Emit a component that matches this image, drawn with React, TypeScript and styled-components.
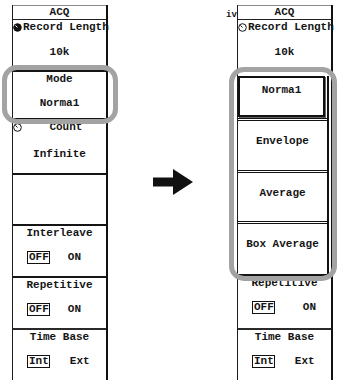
import styled, { createGlobalStyle } from 'styled-components';

const GlobalStyle = createGlobalStyle`
  html, body {
    margin: 0;
    padding: 0;
    background: #fff;
  }
  body {
    font-family: "Liberation Mono", "DejaVu Sans Mono", monospace;
  }
`;

const Page = styled.div`
  width: 337px;
  height: 380px;
  overflow: hidden;
  box-sizing: border-box;
  padding: 5px 0 0 12px;
  display: flex;
  align-items: flex-start;
  background: #fff;
  color: #151515;
  font-size: 11px;
  font-weight: bold;
`;

const PanelWrap = styled.div`
  position: relative;
  flex: none;
  width: 96px;
`;

const Panel = styled.div`
  display: flex;
  flex-direction: column;
  box-sizing: border-box;
  width: 96px;
  border-left: 1px solid #1c1c1c;
  border-right: 2px solid #111;
`;

const Header = styled.div`
  height: 15px;
  box-sizing: border-box;
  border-top: 1px solid #8a8a8a;
  border-bottom: 1px solid #222;
  text-align: center;
  line-height: 13px;
`;

const Section = styled.div<{ $h: number; $first?: boolean; $line?: string }>`
  height: ${(p) => p.$h}px;
  box-sizing: border-box;
  border-top: ${(p) => (p.$first ? 'none' : `2px solid ${p.$line ?? '#151515'}`)};
  display: flex;
  flex-direction: column;
  align-items: center;
`;

const Label = styled.div<{ $left?: boolean }>`
  align-self: ${(p) => (p.$left ? 'flex-start' : 'center')};
  display: flex;
  align-items: center;
  gap: 1px;
  line-height: 14px;
  white-space: nowrap;
`;

const Value = styled.div<{ $gap?: number }>`
  margin-top: ${(p) => p.$gap ?? 10}px;
  line-height: 14px;
`;

const OptRow = styled.div`
  align-self: stretch;
  display: flex;
  align-items: center;
  gap: 18px;
  margin-top: 10px;
  padding-left: 14px;
  line-height: 14px;
`;

const OptBox = styled.span`
  border: 1px solid #111;
  line-height: 11px;
  padding: 0 0 0 1px;
`;

const Opt = styled.span<{ $shift?: number }>`
  margin-left: ${(p) => p.$shift ?? 0}px;
`;

const ArrowCol = styled.div`
  flex: none;
  width: 129px;
  display: flex;
  justify-content: center;
  padding-top: 164px;
`;

const Highlight = styled.div<{ $l: number; $t: number; $w: number; $hh: number }>`
  position: absolute;
  left: ${(p) => p.$l}px;
  top: ${(p) => p.$t}px;
  width: ${(p) => p.$w}px;
  height: ${(p) => p.$hh}px;
  box-sizing: border-box;
  border: 5px solid #a3a3a3;
  border-radius: 15px;
  pointer-events: none;
`;

const CutTag = styled.span`
  position: absolute;
  left: -11px;
  top: 5px;
  font-size: 9px;
  line-height: 10px;
`;

const MenuList = styled.div`
  height: 204px;
  display: flex;
`;

const MenuItems = styled.div`
  flex: 1;
  display: flex;
  flex-direction: column;
`;

const ScrollTrack = styled.div`
  width: 2px;
  margin-top: 6px;
  border-left: 2px solid #111;
`;

const MenuItem = styled.div<{ $h: number; $last?: boolean }>`
  height: ${(p) => p.$h}px;
  box-sizing: border-box;
  border-bottom: ${(p) => (p.$last ? 'none' : '3px double #111')};
  display: flex;
  justify-content: center;
  padding-top: 13px;
  line-height: 14px;
`;

const SelectedItem = styled.div`
  height: 51px;
  box-sizing: border-box;
  border-bottom: 3px double #111;
  display: flex;
  padding: 6px 2px 1px 0;
`;

const SelectedBox = styled.div`
  flex: 1;
  border: 2px solid #111;
  box-shadow: 1px 1px 0 #666;
  display: flex;
  justify-content: center;
  padding-top: 5px;
  line-height: 14px;
`;

function Dial({ filled }: { filled?: boolean }) {
  return (
    <svg width="9" height="9" viewBox="0 0 9 9">
      <circle cx="4.5" cy="4.5" r="3.8" fill={filled ? '#111' : '#fff'} stroke="#111" strokeWidth="1" />
      <path d="M4.5 4.5 L2.4 2.4" stroke={filled ? '#fff' : '#111'} strokeWidth="1" />
    </svg>
  );
}

function OnOff({ left, right, shift }: { left: string; right: string; shift?: number }) {
  return (
    <OptRow>
      <OptBox>{left}</OptBox>
      <Opt $shift={shift}>{right}</Opt>
    </OptRow>
  );
}

export default function App() {
  return (
    <>
      <GlobalStyle />
      <Page>
        <PanelWrap>
          <Panel>
            <Header>ACQ</Header>
            <Section $h={50} $first>
              <Label $left>
                <Dial filled />
                Record Length
              </Label>
              <Value $gap={11}>10k</Value>
            </Section>
            <Section $h={48}>
              <Label>Mode</Label>
              <Value>Norma1</Value>
            </Section>
            <Section $h={55}>
              <Label $left>
                <Dial />
                &nbsp;&nbsp;&nbsp;&nbsp;Count
              </Label>
              <Value $gap={13}>Infinite</Value>
            </Section>
            <Section $h={51} />
            <Section $h={52}>
              <Label>Interleave</Label>
              <OnOff left="OFF" right="ON" />
            </Section>
            <Section $h={52}>
              <Label>Repetitive</Label>
              <OnOff left="OFF" right="ON" />
            </Section>
            <Section $h={52} $line="#2a2a2a">
              <Label>Time Base</Label>
              <OnOff left="Int" right="Ext" shift={2} />
            </Section>
          </Panel>
          <Highlight $l={-10} $t={60} $w={116} $hh={59} />
        </PanelWrap>

        <ArrowCol>
          <svg width="40" height="26" viewBox="0 0 40 26">
            <rect x="0" y="8.5" width="21" height="9" fill="#111" />
            <polygon points="20,0 40,13 20,26" fill="#111" />
          </svg>
        </ArrowCol>

        <PanelWrap>
          <CutTag>iv</CutTag>
          <Panel>
            <Header>ACQ</Header>
            <Section $h={50} $first>
              <Label $left>
                <Dial />
                Record Length
              </Label>
              <Value $gap={11}>10k</Value>
            </Section>
            <MenuList>
              <MenuItems>
                <SelectedItem>
                  <SelectedBox>Norma1</SelectedBox>
                </SelectedItem>
                <MenuItem $h={52}>Envelope</MenuItem>
                <MenuItem $h={51}>Average</MenuItem>
                <MenuItem $h={50} $last>Box Average</MenuItem>
              </MenuItems>
              <ScrollTrack />
            </MenuList>
            <Section $h={54}>
              <Label>Repetitive</Label>
              <OnOff left="OFF" right="ON" shift={10} />
            </Section>
            <Section $h={52} $line="#2a2a2a">
              <Label>Time Base</Label>
              <OnOff left="Int" right="Ext" shift={2} />
            </Section>
          </Panel>
          <Highlight $l={-8} $t={62} $w={108} $hh={214} />
        </PanelWrap>
      </Page>
    </>
  );
}
